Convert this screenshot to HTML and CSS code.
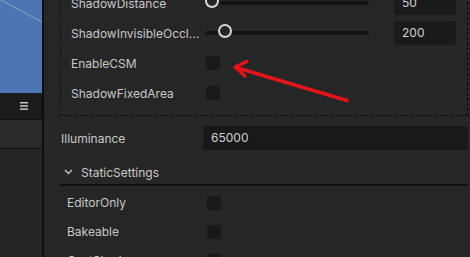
FILE: index.html
```html
<!DOCTYPE html>
<html lang="en">
<head>
    <meta charset="UTF-8">
    <meta name="viewport" content="width=device-width, initial-scale=1.0">
    <title>Light Inspector</title>
    <link rel="stylesheet" href="styles.css">
</head>
<body>
    <div class="app">
        <aside class="side">
            <div class="scene">
                <svg class="scene-line" width="42" height="93" viewBox="0 0 42 93">
                    <line x1="0" y1="-0.5" x2="42" y2="22" stroke="#93a6c4" stroke-width="1"/>
                </svg>
            </div>
            <div class="side-bar">
                <svg class="menu-icon" width="8" height="8" viewBox="0 0 8 8">
                    <rect x="0" y="0" width="8" height="1.5" fill="#c4c4c4"/>
                    <rect x="0" y="3.2" width="8" height="1.5" fill="#c4c4c4"/>
                    <rect x="0" y="6.4" width="8" height="1.5" fill="#c4c4c4"/>
                </svg>
            </div>
            <div class="side-row"></div>
        </aside>

        <main class="inspector">
            <div class="group">
                <div class="prop">
                    <span class="label">ShadowDistance</span>
                    <div class="control">
                        <div class="slider"><span class="thumb" style="left: 0px"></span></div>
                        <div class="num">50</div>
                    </div>
                </div>
                <div class="prop">
                    <span class="label">ShadowInvisibleOccl...</span>
                    <div class="control">
                        <div class="slider"><span class="thumb" style="left: 13px"></span></div>
                        <div class="num">200</div>
                    </div>
                </div>
                <div class="prop">
                    <span class="label">EnableCSM</span>
                    <div class="control"><span class="check"></span></div>
                </div>
                <div class="prop">
                    <span class="label">ShadowFixedArea</span>
                    <div class="control"><span class="check"></span></div>
                </div>
            </div>

            <div class="prop prop-top">
                <span class="label">Illuminance</span>
                <div class="field">65000</div>
            </div>

            <div class="section-head">
                <svg class="chevron" width="9" height="6" viewBox="0 0 9 6">
                    <polyline points="1,1 4.5,4.5 8,1" fill="none" stroke="#c4c4c4" stroke-width="1.4"/>
                </svg>
                <span>StaticSettings</span>
            </div>

            <div class="list">
                <div class="prop prop-sub">
                    <span class="label">EditorOnly</span>
                    <div class="control"><span class="check"></span></div>
                </div>
                <div class="prop prop-sub">
                    <span class="label">Bakeable</span>
                    <div class="control"><span class="check"></span></div>
                </div>
                <div class="prop prop-sub">
                    <span class="label">CastShadow</span>
                    <div class="control"><span class="check"></span></div>
                </div>
            </div>
        </main>

        <!-- annotation arrow drawn over the panel -->
        <svg class="annot" width="470" height="257" viewBox="0 0 470 257">
            <g fill="none" stroke="#e3141c" stroke-width="3.4" stroke-linecap="round" stroke-linejoin="round">
                <line x1="236" y1="67.5" x2="347" y2="100.5"/>
                <polyline points="247,61.5 235,67 245,76"/>
            </g>
        </svg>
    </div>
</body>
</html>
```

FILE: styles.css
```css
html, body {
    margin: 0;
    height: 100%;
    overflow: hidden;
}
body {
    font-family: Inter, "Liberation Sans", Arial, sans-serif;
    font-size: 12px;
    color: #c8c8c8;
    background-color: #262626;
}
.app {
    display: flex;
    height: 257px;
}
.side {
    width: 42px;
    border-right: 2px solid #0e0e0e;
    display: flex;
    flex-direction: column;
    background: #252525;
}
.scene {
    height: 93px;
    background: #4e75b3;
}
.scene-line {
    display: block;
}
.side-bar {
    height: 26px;
    background: #1c1c1c;
    border-bottom: 1px solid #111;
    display: flex;
    align-items: center;
    justify-content: flex-end;
    padding-right: 14px;
}
.menu-icon {
    display: block;
}
.side-row {
    height: 28px;
    background: #2a2a2a;
    border-bottom: 1px solid #141414;
}
.inspector {
    flex: 1;
    padding: 0 2px 0 16px;
}
.group {
    margin-top: -13px;
    border: 1px dashed #0d0d0d;
    padding: 0 10px 7px 10px;
}
.prop {
    display: flex;
    align-items: center;
    height: 30px;
}
.label {
    width: 134px;
    flex-shrink: 0;
    white-space: nowrap;
    overflow: hidden;
}
.control {
    flex: 1;
    display: flex;
    align-items: center;
}
.slider {
    position: relative;
    width: 164px;
    height: 4px;
    border-radius: 2px;
    background: #141414;
    margin-right: 25px;
}
.thumb {
    position: absolute;
    top: -7px;
    width: 14px;
    height: 14px;
    box-sizing: border-box;
    border: 2px solid #d6d6d6;
    border-radius: 50%;
    background: #262626;
}
.num {
    width: 62px;
    height: 24px;
    line-height: 24px;
    box-sizing: border-box;
    padding-left: 8px;
    background: #1a1a1a;
    border-radius: 3px;
    color: #d0d0d0;
}
.check {
    display: block;
    width: 14px;
    height: 14px;
    margin-left: 1px;
    background: #191919;
    border-radius: 3px;
}
.prop-top {
    margin-top: 10px;
    height: 24px;
    padding-left: 1px;
}
.prop-top .label {
    width: 142px;
}
.field {
    flex: 1;
    height: 24px;
    line-height: 24px;
    padding-left: 8px;
    background: #181818;
    border-radius: 3px;
    color: #d0d0d0;
}
.section-head {
    margin-top: 10px;
    height: 24px;
    display: flex;
    align-items: center;
    padding-left: 4px;
    border-bottom: 2px solid #0f0f0f;
}
.chevron {
    display: block;
    margin-right: 8px;
}
.list {
    padding-top: 2px;
}
.prop-sub {
    height: 29px;
    padding-left: 7px;
}
.prop-sub .label {
    width: 139px;
}
.annot {
    position: absolute;
    top: 0;
    left: 0;
    pointer-events: none;
}
```
